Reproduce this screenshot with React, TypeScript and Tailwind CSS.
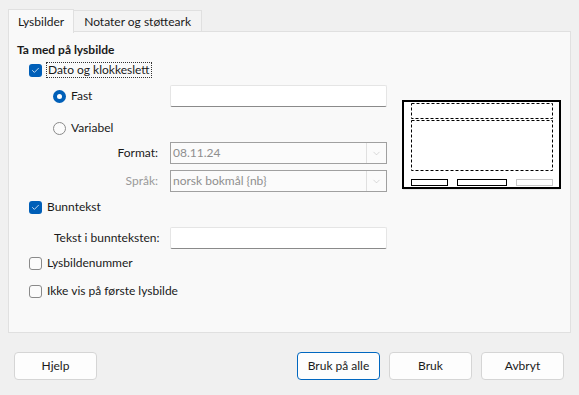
import { Check, ChevronDown } from 'lucide-react';

const font = { fontFamily: 'Lato, "Noto Sans", sans-serif' };

const CheckBox = ({ checked }: { checked: boolean }) =>
  checked ? (
    <span className="flex items-center justify-center w-[13px] h-[13px] rounded-[3px] bg-[#005fb8] shrink-0">
      <Check size={9} strokeWidth={2} className="text-white" />
    </span>
  ) : (
    <span className="w-[13px] h-[13px] rounded-[3px] border border-[#8a8a8a] bg-[#fbfbfb] shrink-0" />
  );

const Radio = ({ checked }: { checked: boolean }) =>
  checked ? (
    <span className="flex items-center justify-center w-[13px] h-[13px] rounded-full bg-[#005fb8] shrink-0">
      <span className="w-[5px] h-[5px] rounded-full bg-white" />
    </span>
  ) : (
    <span className="w-[13px] h-[13px] rounded-full border border-[#8a8a8a] bg-[#fbfbfb] shrink-0" />
  );

const TextInput = () => (
  <div className="w-[217px] h-[22px] bg-white border border-[#e5e5e5] border-b-[#8a8a8a] rounded-[2px]" />
);

const Select = ({ value }: { value: string }) => (
  <div className="w-[217px] h-[22px] flex items-center justify-between bg-[#fbfbfb] border border-[#a0a0a0] text-[#8f8f8f] pl-[2px] pr-[4px]">
    <span>{value}</span>
    <span className="flex items-center justify-center border-l border-[#e0e0e0] h-full pl-[4px]">
      <ChevronDown size={11} strokeWidth={1} className="text-[#b0b0b0]" />
    </span>
  </div>
);

// small slide layout sketch: header, body and three footer fields
const Preview = () => (
  <svg width="159" height="91" viewBox="0 0 159 91" className="shrink-0">
    <rect x="1" y="3" width="157" height="87" fill="#e6e6e6" />
    <rect x="1" y="1" width="157" height="87" fill="#fff" stroke="#000" strokeWidth="2" />
    <rect x="9.5" y="3.5" width="141" height="15" fill="none" stroke="#000" strokeDasharray="3 2" />
    <rect x="9.5" y="20.5" width="141" height="50" fill="none" stroke="#000" strokeDasharray="3 2" />
    <rect x="9.5" y="79.5" width="36" height="6" fill="none" stroke="#000" />
    <rect x="55.5" y="79.5" width="49" height="6" fill="none" stroke="#000" />
    <rect x="114.5" y="79.5" width="36" height="6" fill="none" stroke="#c8c8c8" />
  </svg>
);

const Button = ({ label, primary }: { label: string; primary?: boolean }) => (
  <button
    className={
      primary
        ? 'w-[83px] h-[28px] rounded-[4px] bg-[#fdfdfd] border border-[#0067c0] text-[#1a1a1a]'
        : 'w-[83px] h-[28px] rounded-[4px] bg-[#fdfdfd] border border-[#d5d5d5] text-[#1a1a1a]'
    }
  >
    {label}
  </button>
);

export default function App() {
  return (
    <div className="w-[579px] h-[395px] bg-[#f0f0f0] text-[12px] text-[#1a1a1a] flex flex-col" style={font}>
      {/* tabs */}
      <div className="flex items-end pl-[8px] pt-[8px] h-[32px]">
        <div className="h-[24px] px-[9px] pt-px flex items-center bg-[#f9f9f9] border border-b-0 border-[#e0e0e0] relative top-[1px] z-10">
          Lysbilder
        </div>
        <div className="h-[22px] px-[10px] flex items-center bg-[#f3f3f3] border border-l-0 border-b-0 border-[#e0e0e0]">
          Notater og støtteark
        </div>
      </div>

      {/* panel */}
      <div className="mx-[8px] h-[302px] -mt-px bg-[#f9f9f9] border border-[#e0e0e0] flex items-start pl-[8px]">
        <div className="w-[370px] flex flex-col">
          <div className="mt-[9px] h-[18px] flex items-center font-bold">Ta med på lysbilde</div>

          <div className="mt-[1px] h-[20px] flex items-center pl-[12px] gap-[4px]">
            <CheckBox checked />
            <span className="border border-dotted border-[#333] px-[1px] leading-[14px]">Dato og klokkeslett</span>
          </div>

          <div className="mt-[5px] h-[22px] flex items-center">
            <div className="w-[153px] flex items-center gap-[5px] pl-[36px]">
              <Radio checked />
              <span>Fast</span>
            </div>
            <TextInput />
          </div>

          <div className="mt-[10px] h-[22px] flex items-center">
            <div className="w-[153px] flex items-center gap-[5px] pl-[36px]">
              <Radio checked={false} />
              <span>Variabel</span>
            </div>
          </div>

          <div className="mt-[3px] h-[22px] flex items-center">
            <div className="w-[153px] text-right pr-[12px]">Format:</div>
            <Select value="08.11.24" />
          </div>

          <div className="mt-[6px] h-[22px] flex items-center">
            <div className="w-[153px] text-right pr-[12px] text-[#9a9a9a]">Språk:</div>
            <Select value="norsk bokmål {nb}" />
          </div>

          <div className="mt-[5px] h-[20px] flex items-center pl-[12px] gap-[5px]">
            <CheckBox checked />
            <span>Bunntekst</span>
          </div>

          <div className="mt-[10px] h-[22px] flex items-center">
            <div className="w-[153px] pl-[37px]">Tekst i bunnteksten:</div>
            <TextInput />
          </div>

          <div className="mt-[4px] h-[20px] flex items-center pl-[12px] gap-[5px]">
            <CheckBox checked={false} />
            <span>Lysbildenummer</span>
          </div>

          <div className="mt-[8px] h-[20px] flex items-center pl-[12px] gap-[5px]">
            <CheckBox checked={false} />
            <span>Ikke vis på første lysbilde</span>
          </div>
        </div>

        <div className="ml-[15px] mt-[68px]">
          <Preview />
        </div>
      </div>

      {/* buttons */}
      <div className="flex items-center mt-[19px] px-[14px]">
        <Button label="Hjelp" />
        <div className="ml-auto flex gap-[9px] pr-px">
          <Button label="Bruk på alle" primary />
          <Button label="Bruk" />
          <Button label="Avbryt" />
        </div>
      </div>
    </div>
  );
}
